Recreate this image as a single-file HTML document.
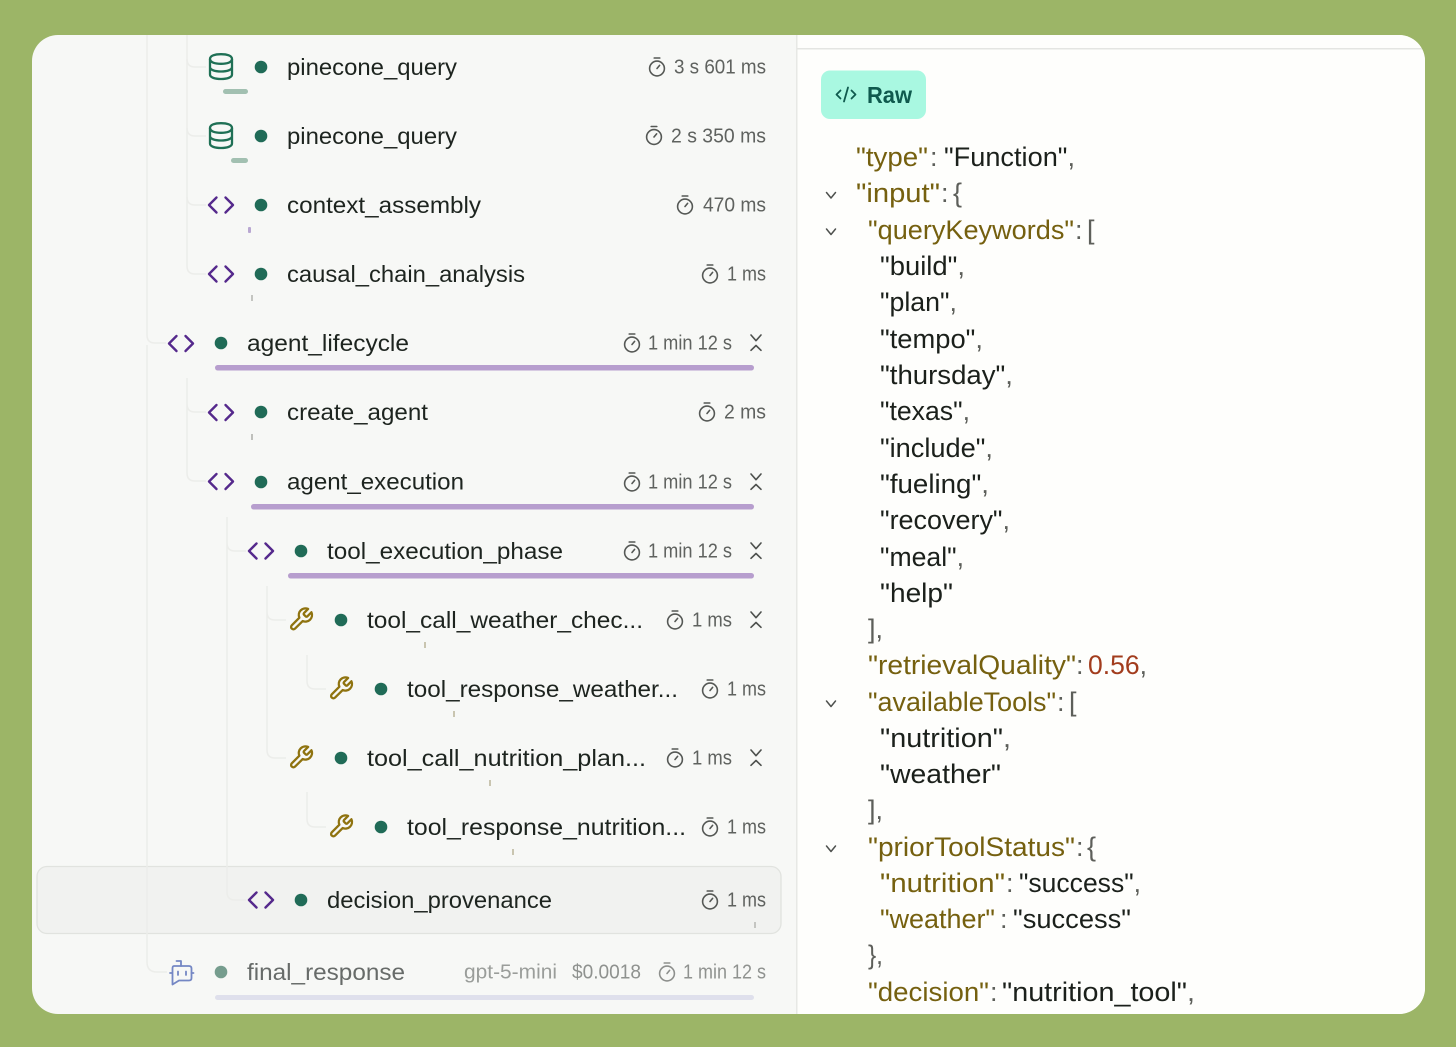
<!DOCTYPE html>
<html lang="en">
<head>
<meta charset="utf-8">
<title>Trace view</title>
<style>
html,body{margin:0;padding:0;background:#9cb567;width:1456px;height:1047px;overflow:hidden}
svg{display:block}
text{font-family:"Liberation Sans",sans-serif;white-space:pre}
.n{font-size:23px;fill:#1d241f}
.t{font-size:20px;fill:#5f625f}
.j{font-size:27px}
.k{fill:#75600f}
.s{fill:#1b201b}
.p{fill:#5d5f5a}
.v{fill:#a23c1d}
.g{fill:none;stroke:#ecedea;stroke-width:1.5}
.dot{fill:#206b57}
</style>
</head>
<body>
<svg width="1456" height="1047" viewBox="0 0 1456 1047" xmlns="http://www.w3.org/2000/svg">
<defs>
<clipPath id="card"><rect x="32" y="35" width="1393" height="979" rx="26"/></clipPath>
<g id="timer" fill="none" stroke="#555855" stroke-width="1.6" stroke-linecap="round"><circle cx="0" cy="1.5" r="7.4"/><path d="M-2.8-9H2.800M0 1.500L2.600-1.600"/></g>
<g id="code" fill="none" stroke="#55298c" stroke-width="2.400" stroke-linecap="round" stroke-linejoin="round"><path d="M-4.500-7.500L-12 0L-4.500 7.500M4.500-7.500L12 0L4.500 7.500"/></g>
<g id="db" fill="none" stroke="#1f7055" stroke-width="2.300"><path d="M-11-7.500C-11-10.800-6-12.300 0-12.300S11-10.800 11-7.500S6-2.700 0-2.700S-11-4.200-11-7.500Z"/><path d="M-11-7.500V8C-11 11-6 12.500 0 12.500S11 11 11 8V-7.500M-11 .5C-11 3.500-6 5 0 5S11 3.500 11 .5"/></g>
<g id="wrench" fill="none" stroke="#8f730f" stroke-width="2.100" stroke-linejoin="round"><path transform="translate(-13.200 -12.800) scale(1.1)" d="M14.700 6.300a1 1 0 0 0 0 1.400l1.600 1.600a1 1 0 0 0 1.400 0l3.770-3.770a6 6 0 0 1-7.940 7.940l-6.910 6.910a2.120 2.120 0 0 1-3-3l6.910-6.910a6 6 0 0 1 7.940-7.940l-3.760 3.760z"/></g>
<g id="coll" fill="none" stroke="#4d504d" stroke-width="1.600" stroke-linecap="round" stroke-linejoin="round"><path d="M-5-8L0-2.300L5-8M-5 7.300L0 2.500L5 7.300"/></g>
<path id="chev" fill="none" stroke="#4e514e" stroke-width="1.500" stroke-linecap="round" stroke-linejoin="round" d="M-4.500-3L0 2.500L4.500-3"/>
</defs>

<g clip-path="url(#card)">
<rect x="32" y="35" width="1393" height="979" fill="#f7f8f6"/>
<rect x="797" y="35" width="628" height="979" fill="#fefefc"/>
<rect x="796" y="35" width="1.500" height="979" fill="#e7e8e5"/>
<rect x="797" y="48" width="628" height="1.500" fill="#e4e5e2"/>

<!-- selected row -->
<rect x="37" y="866.500" width="744" height="67" rx="10" fill="#f1f2f0" stroke="#e1e3df" stroke-width="1.300"/>

<!-- guides -->
<path class="g" d="M147 35V335Q147 343 155 343H166"/>
<path class="g" d="M147 345V952"/>
<path class="g" d="M147 952V962Q147 972 157 972H167"/>
<path class="g" d="M187 35V266Q187 274 195 274H206"/>
<path class="g" d="M187 59Q187 67 195 67H206M187 128Q187 136 195 136H206M187 197Q187 205 195 205H206"/>
<path class="g" d="M187 378V473Q187 481 195 481H206M187 404Q187 412 195 412H206"/>
<path class="g" d="M227 517V892Q227 900 235 900H246M227 543Q227 551 235 551H246"/>
<path class="g" d="M267 586V750Q267 758 275 758H286M267 612Q267 620 275 620H286"/>
<path class="g" d="M307 655V681Q307 689 315 689H326M307 792V819Q307 827 315 827H326"/>

<!-- bars -->
<rect x="223" y="89" width="25" height="5" rx="2.500" fill="#a2c0b1"/>
<rect x="231" y="158" width="17" height="5" rx="2.500" fill="#a2c0b1"/>
<rect x="248" y="227" width="3" height="6" rx="1" fill="#b9a8d2"/>
<rect x="251" y="295" width="2" height="6" fill="#c4c5c1"/>
<rect x="215" y="365" width="539" height="5.500" rx="2.700" fill="#b79ece"/>
<rect x="251" y="434" width="2" height="6" fill="#bfc0bc"/>
<rect x="251" y="504" width="503" height="5.500" rx="2.700" fill="#b79ece"/>
<rect x="288" y="573" width="466" height="5.500" rx="2.700" fill="#b79ece"/>
<rect x="424" y="642" width="2" height="6" fill="#c9c5b0"/>
<rect x="453" y="711" width="2" height="6" fill="#c9c5b0"/>
<rect x="489" y="780" width="2" height="6" fill="#c9c5b0"/>
<rect x="512" y="849" width="2" height="6" fill="#c9c5b0"/>
<rect x="754" y="922" width="2" height="6" fill="#c4c5c1"/>
<rect x="215" y="995" width="539" height="5" rx="2.500" fill="#dfe0ec"/>

<!-- icons -->
<use href="#db" x="221" y="66.500"/>
<use href="#db" x="221" y="135.500"/>
<use href="#code" x="221" y="205"/>
<use href="#code" x="221" y="274"/>
<use href="#code" x="181" y="343.500"/>
<use href="#code" x="221" y="412.500"/>
<use href="#code" x="221" y="481.500"/>
<use href="#code" x="261" y="551"/>
<use href="#wrench" x="301" y="619"/>
<use href="#wrench" x="341" y="688"/>
<use href="#wrench" x="301" y="757"/>
<use href="#wrench" x="341" y="826"/>
<use href="#code" x="261" y="900"/>
<g fill="none" stroke="#7487c4" stroke-width="1.800" stroke-linecap="round" stroke-linejoin="round">
<path d="M174 966H189Q191.500 966 191.500 968.500V978Q191.500 980.500 189 980.500H179L172.500 984.500V968.500Q172.500 966 174 966Z"/>
<path d="M181 966V961H176.500M170 973H172M191.500 973H193.500M178 971.500V975M186 971.500V975"/>
</g>

<!-- dots -->
<circle class="dot" cx="261" cy="67" r="6.300"/>
<circle class="dot" cx="261" cy="136" r="6.300"/>
<circle class="dot" cx="261" cy="205" r="6.300"/>
<circle class="dot" cx="261" cy="274" r="6.300"/>
<circle class="dot" cx="221" cy="343" r="6.300"/>
<circle class="dot" cx="261" cy="412" r="6.300"/>
<circle class="dot" cx="261" cy="482" r="6.300"/>
<circle class="dot" cx="301" cy="551" r="6.300"/>
<circle class="dot" cx="341" cy="620" r="6.300"/>
<circle class="dot" cx="381" cy="689" r="6.300"/>
<circle class="dot" cx="341" cy="758" r="6.300"/>
<circle class="dot" cx="381" cy="827" r="6.300"/>
<circle class="dot" cx="301" cy="900" r="6.300"/>
<circle cx="221" cy="972" r="6.300" fill="#769d8e"/>

<!-- names -->
<text class="n" x="287" y="75" textLength="170" lengthAdjust="spacingAndGlyphs">pinecone_query</text>
<text class="n" x="287" y="144" textLength="170" lengthAdjust="spacingAndGlyphs">pinecone_query</text>
<text class="n" x="287" y="213" textLength="194" lengthAdjust="spacingAndGlyphs">context_assembly</text>
<text class="n" x="287" y="282" textLength="238" lengthAdjust="spacingAndGlyphs">causal_chain_analysis</text>
<text class="n" x="247" y="351" textLength="162" lengthAdjust="spacingAndGlyphs">agent_lifecycle</text>
<text class="n" x="287" y="420" textLength="141" lengthAdjust="spacingAndGlyphs">create_agent</text>
<text class="n" x="287" y="489.500" textLength="177" lengthAdjust="spacingAndGlyphs">agent_execution</text>
<text class="n" x="327" y="559" textLength="236" lengthAdjust="spacingAndGlyphs">tool_execution_phase</text>
<text class="n" x="367" y="628" textLength="276" lengthAdjust="spacingAndGlyphs">tool_call_weather_chec...</text>
<text class="n" x="407" y="697" textLength="271" lengthAdjust="spacingAndGlyphs">tool_response_weather...</text>
<text class="n" x="367" y="766" textLength="279" lengthAdjust="spacingAndGlyphs">tool_call_nutrition_plan...</text>
<text class="n" x="407" y="835" textLength="279" lengthAdjust="spacingAndGlyphs">tool_response_nutrition...</text>
<text class="n" x="327" y="908" textLength="225" lengthAdjust="spacingAndGlyphs">decision_provenance</text>
<text class="n" x="247" y="980" textLength="158" lengthAdjust="spacingAndGlyphs" style="fill:#676b69">final_response</text>

<!-- timers -->
<use href="#timer" x="657" y="67"/>
<use href="#timer" x="654" y="135.500"/>
<use href="#timer" x="685" y="205"/>
<use href="#timer" x="710" y="274"/>
<use href="#timer" x="632" y="343"/>
<use href="#timer" x="707" y="412"/>
<use href="#timer" x="632" y="482"/>
<use href="#timer" x="632" y="551"/>
<use href="#timer" x="675" y="620"/>
<use href="#timer" x="710" y="689"/>
<use href="#timer" x="675" y="758"/>
<use href="#timer" x="710" y="827"/>
<use href="#timer" x="710" y="900"/>
<use href="#timer" x="667" y="972" opacity=".65"/>

<text class="t" x="674" y="73.500" textLength="92" lengthAdjust="spacingAndGlyphs">3 s 601 ms</text>
<text class="t" x="671" y="142.500" textLength="95" lengthAdjust="spacingAndGlyphs">2 s 350 ms</text>
<text class="t" x="703" y="211.500" textLength="63" lengthAdjust="spacingAndGlyphs">470 ms</text>
<text class="t" x="727" y="280.500" textLength="39" lengthAdjust="spacingAndGlyphs">1 ms</text>
<text class="t" x="648" y="349.500" textLength="84" lengthAdjust="spacingAndGlyphs">1 min 12 s</text>
<text class="t" x="724" y="418.500" textLength="42" lengthAdjust="spacingAndGlyphs">2 ms</text>
<text class="t" x="648" y="488.500" textLength="84" lengthAdjust="spacingAndGlyphs">1 min 12 s</text>
<text class="t" x="648" y="557.500" textLength="84" lengthAdjust="spacingAndGlyphs">1 min 12 s</text>
<text class="t" x="692" y="626.500" textLength="40" lengthAdjust="spacingAndGlyphs">1 ms</text>
<text class="t" x="727" y="695.500" textLength="39" lengthAdjust="spacingAndGlyphs">1 ms</text>
<text class="t" x="692" y="764.500" textLength="40" lengthAdjust="spacingAndGlyphs">1 ms</text>
<text class="t" x="727" y="833.500" textLength="39" lengthAdjust="spacingAndGlyphs">1 ms</text>
<text class="t" x="727" y="906.500" textLength="39" lengthAdjust="spacingAndGlyphs">1 ms</text>
<text class="t" x="464" y="978.500" textLength="93" lengthAdjust="spacingAndGlyphs" style="fill:#9a9d9a">gpt-5-mini</text>
<text class="t" x="572" y="978.500" textLength="69" lengthAdjust="spacingAndGlyphs" style="fill:#8f928f">$0.0018</text>
<text class="t" x="683" y="978.500" textLength="83" lengthAdjust="spacingAndGlyphs" style="fill:#8f928f">1 min 12 s</text>

<use href="#coll" x="756" y="343"/>
<use href="#coll" x="756" y="482"/>
<use href="#coll" x="756" y="551"/>
<use href="#coll" x="756" y="620"/>
<use href="#coll" x="756" y="758"/>

<!-- Raw button -->
<rect x="821" y="70.500" width="105" height="48.500" rx="9" fill="#a9f8e1"/>
<g fill="none" stroke="#0f5a4e" stroke-width="1.800" stroke-linecap="round" stroke-linejoin="round"><path d="M840.500 90.500L836.500 94.500L840.500 98.500M851.500 90.500L855.500 94.500L851.500 98.500M848 87.500L844 101.500"/></g>
<text x="867" y="103" font-size="23" font-weight="700" fill="#0f5a4e" textLength="45" lengthAdjust="spacingAndGlyphs">Raw</text>

<!-- JSON chevrons -->
<use href="#chev" x="831" y="195.500"/>
<use href="#chev" x="831" y="232"/>
<use href="#chev" x="831" y="704"/>
<use href="#chev" x="831" y="849"/>

<!-- JSON -->
<text class="j k" x="856" y="166" textLength="72" lengthAdjust="spacingAndGlyphs">"type"</text><text class="j p" x="930" y="166">:</text><text class="j" x="944" y="166" textLength="131" lengthAdjust="spacingAndGlyphs"><tspan class="s">"Function"</tspan><tspan class="p">,</tspan></text>
<text class="j k" x="856" y="202" textLength="84" lengthAdjust="spacingAndGlyphs">"input"</text><text class="j p" x="941" y="202">:</text><text class="j p" x="953" y="202">{</text>
<text class="j k" x="868" y="239" textLength="206" lengthAdjust="spacingAndGlyphs">"queryKeywords"</text><text class="j p" x="1075" y="239">:</text><text class="j p" x="1087" y="239">[</text>
<text class="j" x="880" y="275" textLength="85" lengthAdjust="spacingAndGlyphs"><tspan class="s">"build"</tspan><tspan class="p">,</tspan></text>
<text class="j" x="880" y="311" textLength="77" lengthAdjust="spacingAndGlyphs"><tspan class="s">"plan"</tspan><tspan class="p">,</tspan></text>
<text class="j" x="880" y="348" textLength="103" lengthAdjust="spacingAndGlyphs"><tspan class="s">"tempo"</tspan><tspan class="p">,</tspan></text>
<text class="j" x="880" y="384" textLength="133" lengthAdjust="spacingAndGlyphs"><tspan class="s">"thursday"</tspan><tspan class="p">,</tspan></text>
<text class="j" x="880" y="420" textLength="90" lengthAdjust="spacingAndGlyphs"><tspan class="s">"texas"</tspan><tspan class="p">,</tspan></text>
<text class="j" x="880" y="457" textLength="113" lengthAdjust="spacingAndGlyphs"><tspan class="s">"include"</tspan><tspan class="p">,</tspan></text>
<text class="j" x="880" y="493" textLength="109" lengthAdjust="spacingAndGlyphs"><tspan class="s">"fueling"</tspan><tspan class="p">,</tspan></text>
<text class="j" x="880" y="529" textLength="130" lengthAdjust="spacingAndGlyphs"><tspan class="s">"recovery"</tspan><tspan class="p">,</tspan></text>
<text class="j" x="880" y="566" textLength="84" lengthAdjust="spacingAndGlyphs"><tspan class="s">"meal"</tspan><tspan class="p">,</tspan></text>
<text class="j" x="880" y="602" textLength="73" lengthAdjust="spacingAndGlyphs"><tspan class="s">"help"</tspan></text>
<text class="j p" x="868" y="638" textLength="15" lengthAdjust="spacingAndGlyphs">],</text>
<text class="j k" x="868" y="674" textLength="208" lengthAdjust="spacingAndGlyphs">"retrievalQuality"</text><text class="j p" x="1076" y="674">:</text><text class="j" x="1088" y="674" textLength="59" lengthAdjust="spacingAndGlyphs"><tspan class="v">0.56</tspan><tspan class="p">,</tspan></text>
<text class="j k" x="868" y="711" textLength="188" lengthAdjust="spacingAndGlyphs">"availableTools"</text><text class="j p" x="1057" y="711">:</text><text class="j p" x="1069" y="711">[</text>
<text class="j" x="880" y="747" textLength="131" lengthAdjust="spacingAndGlyphs"><tspan class="s">"nutrition"</tspan><tspan class="p">,</tspan></text>
<text class="j" x="880" y="783" textLength="121" lengthAdjust="spacingAndGlyphs"><tspan class="s">"weather"</tspan></text>
<text class="j p" x="868" y="819" textLength="15" lengthAdjust="spacingAndGlyphs">],</text>
<text class="j k" x="868" y="856" textLength="207" lengthAdjust="spacingAndGlyphs">"priorToolStatus"</text><text class="j p" x="1076" y="856">:</text><text class="j p" x="1087" y="856">{</text>
<text class="j k" x="880" y="892" textLength="125" lengthAdjust="spacingAndGlyphs">"nutrition"</text><text class="j p" x="1006" y="892">:</text><text class="j" x="1019" y="892" textLength="122" lengthAdjust="spacingAndGlyphs"><tspan class="s">"success"</tspan><tspan class="p">,</tspan></text>
<text class="j k" x="880" y="928" textLength="115" lengthAdjust="spacingAndGlyphs">"weather"</text><text class="j p" x="1000" y="928">:</text><text class="j s" x="1013" y="928" textLength="118" lengthAdjust="spacingAndGlyphs">"success"</text>
<text class="j p" x="868" y="964" textLength="15" lengthAdjust="spacingAndGlyphs">},</text>
<text class="j k" x="868" y="1001" textLength="121" lengthAdjust="spacingAndGlyphs">"decision"</text><text class="j p" x="990" y="1001">:</text><text class="j" x="1002" y="1001" textLength="193" lengthAdjust="spacingAndGlyphs"><tspan class="s">"nutrition_tool"</tspan><tspan class="p">,</tspan></text>
</g>
</svg>
</body>
</html>
